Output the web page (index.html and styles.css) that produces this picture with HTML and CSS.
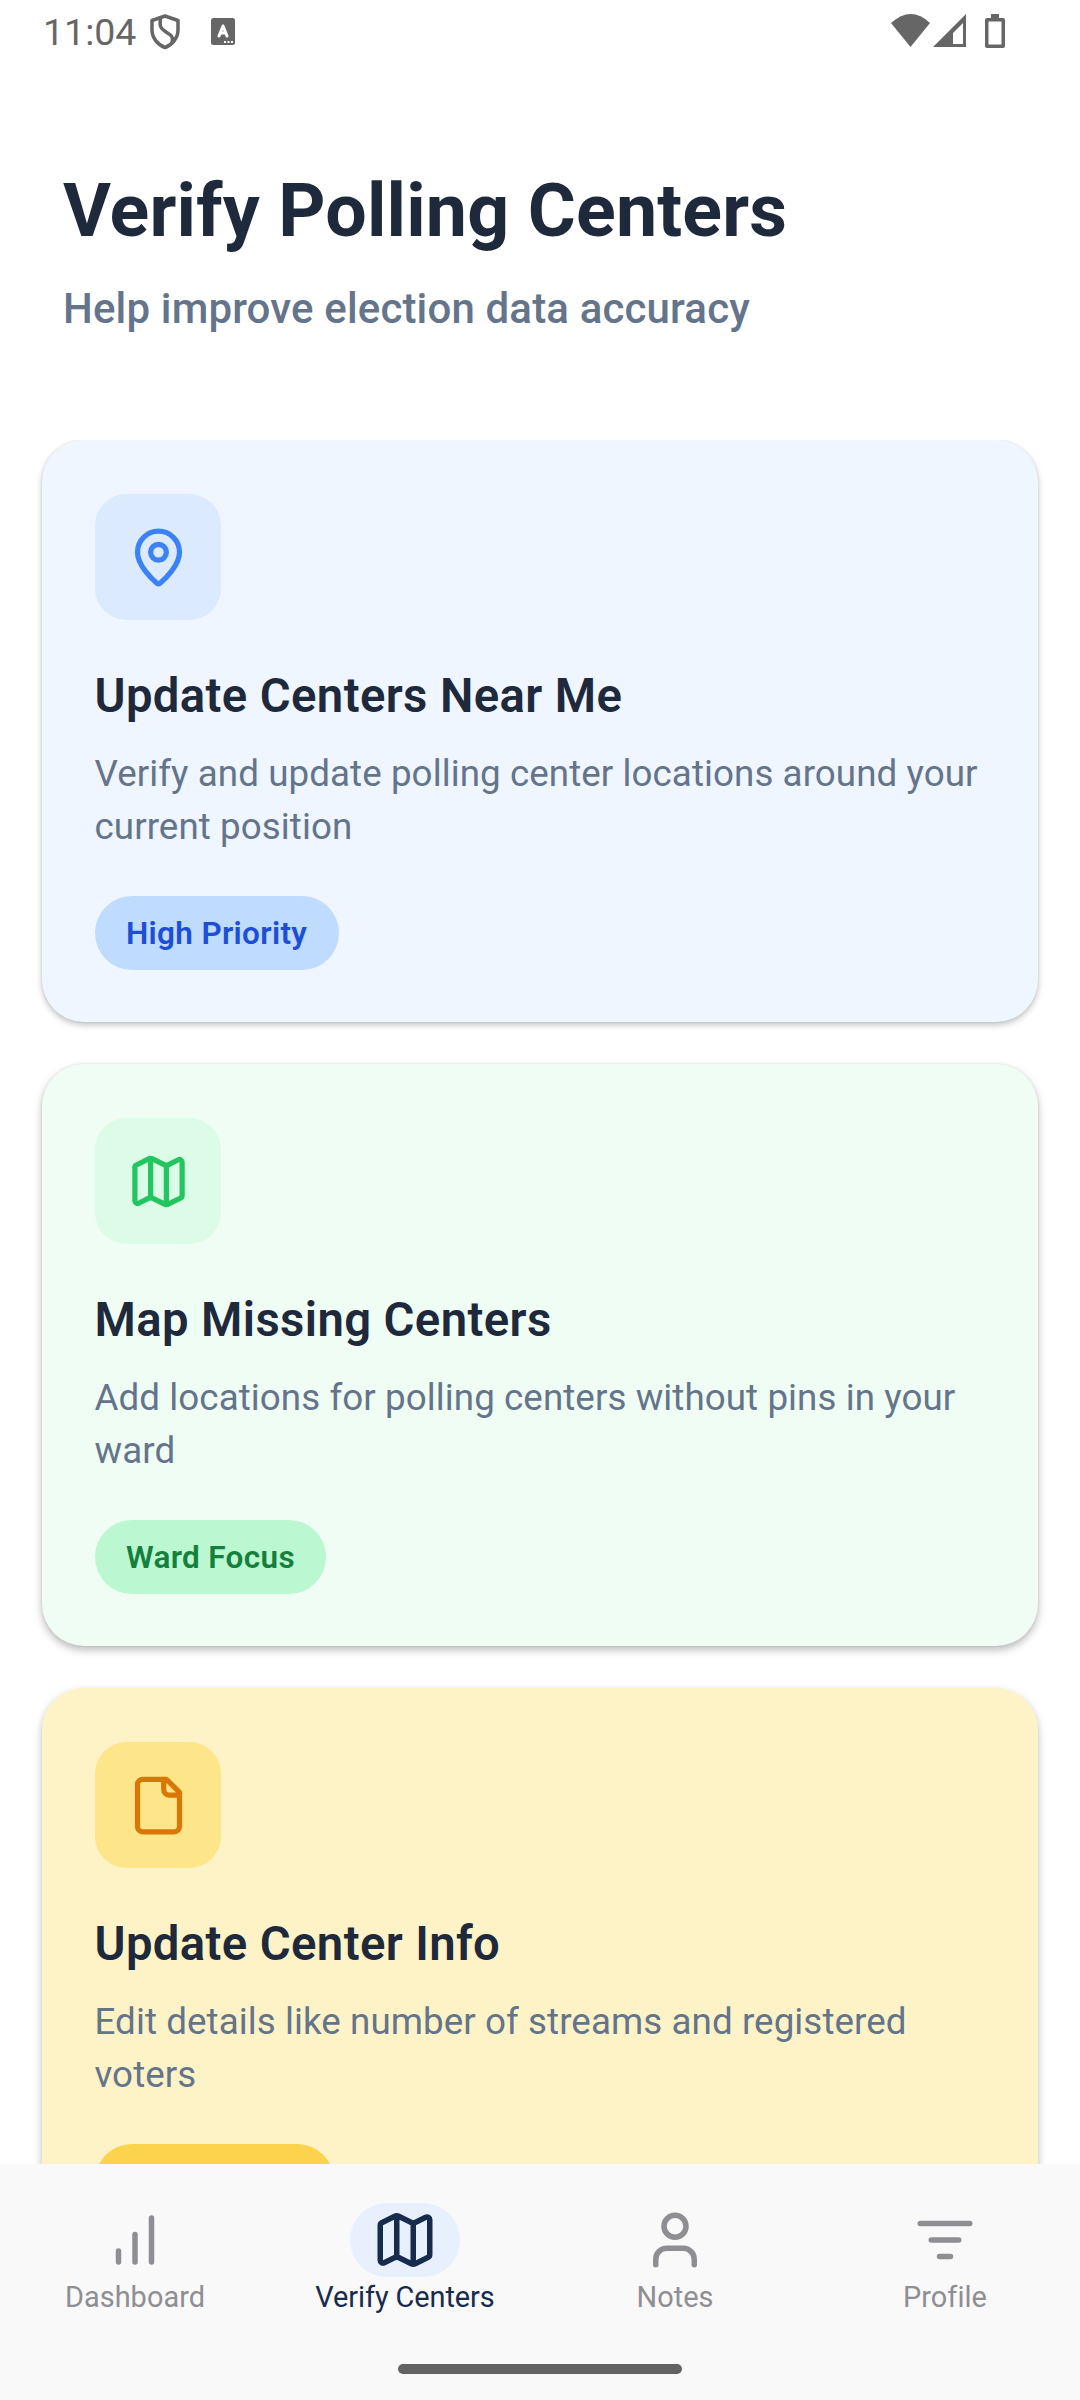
FILE: index.html
```html
<!DOCTYPE html>
<html lang="en">
<head>
<meta charset="utf-8">
<title>Verify Polling Centers</title>
<link rel="stylesheet" href="styles.css">
</head>
<body>
<div class="screen">
  <div class="status">
    <span class="time">11:04</span>
    <svg class="shield" width="30" height="36" viewBox="0 0 30 36"><path d="M15 2 28 6.500V16C28 24 22 31 15 33.500 8 31 2 24 2 16V6.500Z"/><path d="M10.500 4.500C9 14 12 15 16 18 21 21 24 23 22 29"/></svg>
    <svg class="abox" width="24" height="27" viewBox="0 0 24 27"><rect width="24" height="27" rx="2.500" fill="#666"/><path d="M8 18 12 8 16 18M9.500 15H14.500" fill="none" stroke="#fff" stroke-width="3" stroke-linecap="round" stroke-linejoin="round"/><path d="M13 24h2m1.500 0h2m1.500 0h2" stroke="#fff" stroke-width="2"/></svg>
    <svg class="signals" width="116" height="36" viewBox="0 0 116 36"><path d="M0 9Q20 -9 39 9L19.500 33Z"/><path fill-rule="evenodd" d="M75 0V33H42ZM72 9 62 19V30H72Z"/><path fill-rule="evenodd" d="M100 0h8v4h4q2 0 2 2V32q0 2-2 2H96q-2 0-2-2V6q0-2 2-2h4ZM97.500 7.500V30.500H110.500V7.500Z"/></svg>
  </div>
  <header class="header">
    <h1>Verify Polling Centers</h1>
    <p>Help improve election data accuracy</p>
  </header>
  <main class="cards">
    <section class="card blue">
      <div class="icon"><svg viewBox="0 0 24 24"><path d="M20 10C20 14.993 14.461 20.193 12.601 21.799a1 1 0 0 1-1.202 0C9.539 20.193 4 14.993 4 10a8 8 0 0 1 16 0Z"/><circle cx="12" cy="10" r="3"/></svg></div>
      <h2>Update Centers Near Me</h2>
      <p>Verify and update polling center locations around your current position</p>
      <span class="tag">High Priority</span>
    </section>
    <section class="card green">
      <div class="icon"><svg viewBox="0 0 24 24"><path d="M14.106 5.553a2 2 0 0 0 1.788 0l3.659-1.830A1 1 0 0 1 21 4.619v12.764a1 1 0 0 1-.553.894l-4.553 2.277a2 2 0 0 1-1.788 0l-4.212-2.106a2 2 0 0 0-1.788 0l-3.659 1.830A1 1 0 0 1 3 19.381V6.618a1 1 0 0 1 .553-.894l4.553-2.277a2 2 0 0 1 1.788 0zM15 5.764v15M9 3.236v15"/></svg></div>
      <h2>Map Missing Centers</h2>
      <p>Add locations for polling centers without pins in your ward</p>
      <span class="tag">Ward Focus</span>
    </section>
    <section class="card yellow">
      <div class="icon"><svg viewBox="0 0 24 24"><path d="M15 2H6a2 2 0 0 0-2 2v16a2 2 0 0 0 2 2h12a2 2 0 0 0 2-2V7ZM14 2v4a2 2 0 0 0 2 2h4"/></svg></div>
      <h2>Update Center Info</h2>
      <p>Edit details like number of streams and registered voters</p>
      <span class="tag"></span>
    </section>
  </main>
  <nav class="nav">
    <div class="tabs">
      <div class="tab"><span class="pill"><svg viewBox="0 0 24 24"><path d="M12 20V10M18 20V4M6 20v-4"/></svg></span><span>Dashboard</span></div>
      <div class="tab active"><span class="pill"><svg viewBox="0 0 24 24"><path d="M14.106 5.553a2 2 0 0 0 1.788 0l3.659-1.830A1 1 0 0 1 21 4.619v12.764a1 1 0 0 1-.553.894l-4.553 2.277a2 2 0 0 1-1.788 0l-4.212-2.106a2 2 0 0 0-1.788 0l-3.659 1.830A1 1 0 0 1 3 19.381V6.618a1 1 0 0 1 .553-.894l4.553-2.277a2 2 0 0 1 1.788 0zM15 5.764v15M9 3.236v15"/></svg></span><span>Verify Centers</span></div>
      <div class="tab"><span class="pill"><svg viewBox="0 0 24 24"><path d="M19 21v-2a4 4 0 0 0-4-4H9a4 4 0 0 0-4 4v2"/><circle cx="12" cy="7" r="4"/></svg></span><span>Notes</span></div>
      <div class="tab"><span class="pill"><svg viewBox="0 0 24 24"><path d="M3 6h18M7 12h10M10 18h4"/></svg></span><span>Profile</span></div>
    </div>
    <div class="home"></div>
  </nav>
</div>
</body>
</html>
```
FILE: styles.css
```css
* { box-sizing: border-box; }
body { margin: 0; background: #fff; font-family: Roboto, sans-serif; }
h1, h2, p { margin: 0; }
.screen { width: 1080px; height: 2400px; overflow: hidden; display: flex; flex-direction: column; }
.status { height: 63px; flex: none; display: flex; align-items: flex-start; padding: 14px 73px 0 43px; color: #666; }
.time { font-size: 37.5px; line-height: 36px; width: 107px; white-space: nowrap; font-weight: 380; }
.shield { fill: none; stroke: #666; stroke-width: 3.5; stroke-linejoin: round; }
.abox { margin: 4px 0 0 31px; }
.signals { margin-left: auto; fill: #666; }
.header { height: 377.3px; flex: none; padding: 102px 63px 0; }
h1 { font-size: 73.5px; line-height: 92px; font-weight: 700; letter-spacing: .17px; color: #1e293b; }
.header p { margin-top: 27px; font-size: 42px; line-height: 50px; font-weight: 500; letter-spacing: .15px; color: #64748b; }
.cards { flex: 1; min-height: 0; overflow: hidden; padding: 0 42px; display: flex; flex-direction: column; gap: 42px; }
.card { flex: none; height: 581.9px; border-radius: 42px; padding: 53.5px 52.5px 0; display: flex; flex-direction: column; align-items: flex-start; box-shadow: 0 3px 6px rgba(0,0,0,.24), 0 0 3px rgba(0,0,0,.08); }
.icon { width: 126px; height: 126px; border-radius: 31.5px; display: flex; align-items: center; justify-content: center; }
svg { flex: none; }
.icon svg { width: 63px; height: 63px; margin: 1px 0 0 1px; }
.icon svg, .pill svg { fill: none; stroke: currentColor; stroke-width: 2; stroke-linecap: round; stroke-linejoin: round; }
h2 { margin-top: 48px; font-size: 47.25px; line-height: 56px; font-weight: 600; letter-spacing: .38px; color: #1e293b; }
.card p { margin-top: 23px; font-size: 36.75px; line-height: 53px; letter-spacing: .07px; color: #64748b; }
.tag { margin-top: 43px; height: 74.5px; min-width: 239px; border-radius: 37px; padding: 0 31.5px; font-size: 31.5px; line-height: 76px; font-weight: 600; letter-spacing: .32px; }
.blue { background: #eff6ff; }
.blue .icon { background: #dbeafe; color: #3b82f6; }
.blue .tag { background: #bfdbfe; color: #1d4ed8; }
.green { background: #f0fdf4; box-shadow: 0 4px 8px rgba(0,0,0,.27), 0 0 3px rgba(0,0,0,.08); }
.green .icon { background: #dcfce7; color: #22c55e; }
.green .tag { background: #bbf7d0; color: #15803d; min-width: 0; }
.yellow { background: #fef3c7; box-shadow: 0 4px 8px rgba(0,0,0,.27); }
.yellow .icon { background: #fde68a; color: #d97706; }
.yellow .tag { background: #fcd34d; color: #b45309; }
.nav { height: 236px; flex: none; background: #f9f9f9; padding-top: 39px; display: flex; flex-direction: column; align-items: center; z-index: 1; }
.tabs { width: 100%; display: grid; grid-template-columns: repeat(4, 1fr); height: 161px; }
.tab { display: flex; flex-direction: column; align-items: center; color: #8e8e93; font-size: 28.9px; line-height: 34px; gap: 3px; letter-spacing: .05px; }
.pill { width: 110px; height: 74px; border-radius: 37px; display: flex; align-items: center; justify-content: center; }
.pill svg { width: 66px; height: 66px; }
.active { color: #172b4d; letter-spacing: -.07px; }
.active .pill { background: #e8f0fe; }
.home { width: 284px; height: 10px; border-radius: 5px; background: #636363; }
```
